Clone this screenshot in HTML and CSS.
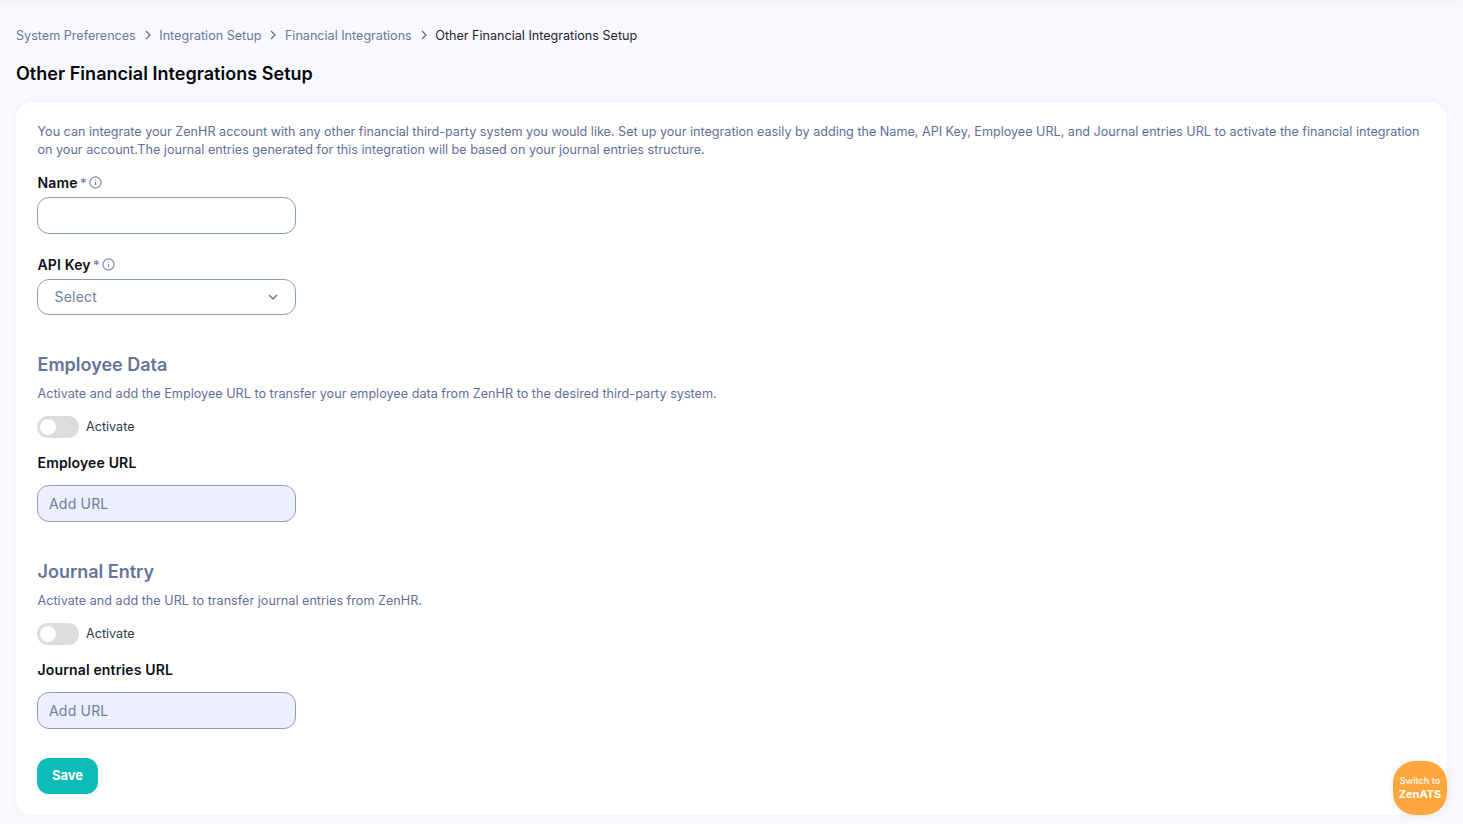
FILE: index.html
```html
<!DOCTYPE html>
<html lang="en">
<head>
<meta charset="utf-8">
<title>Other Financial Integrations Setup</title>
<link rel="stylesheet" href="styles.css">
</head>
<body>
<div class="page">
  <nav class="crumbs">
    <span class="crumb">System Preferences</span>
    <svg class="crumb-sep" viewBox="0 0 8 10"><path d="M2 1l4 4-4 4"/></svg>
    <span class="crumb">Integration Setup</span>
    <svg class="crumb-sep" viewBox="0 0 8 10"><path d="M2 1l4 4-4 4"/></svg>
    <span class="crumb">Financial Integrations</span>
    <svg class="crumb-sep" viewBox="0 0 8 10"><path d="M2 1l4 4-4 4"/></svg>
    <span class="crumb crumb-current">Other Financial Integrations Setup</span>
  </nav>
  <h1 class="title">Other Financial Integrations Setup</h1>
  <main class="card">
    <p class="desc intro">You can integrate your ZenHR account with any other financial third-party system you would like. Set up your integration easily by adding the Name, API Key, Employee URL, and Journal entries URL to activate the financial integration on your account.The journal entries generated for this integration will be based on your journal entries structure.</p>

    <div class="label-row name-label">
      <span class="label">Name</span><span class="req">*</span>
      <svg class="info" viewBox="0 0 12 12"><circle cx="6" cy="6" r="5.2"/><path d="M6 5.4v3M6 3.2v.9"/></svg>
    </div>
    <div class="input"></div>

    <div class="label-row api-label">
      <span class="label">API Key</span><span class="req">*</span>
      <svg class="info" viewBox="0 0 12 12"><circle cx="6" cy="6" r="5.2"/><path d="M6 5.4v3M6 3.2v.9"/></svg>
    </div>
    <div class="input select">
      <span>Select</span>
      <svg class="chev" viewBox="0 0 10 6"><path d="M1 1l4 4 4-4"/></svg>
    </div>

    <h2 class="section">Employee Data</h2>
    <p class="desc">Activate and add the Employee URL to transfer your employee data from ZenHR to the desired third-party system.</p>
    <div class="toggle-row">
      <span class="toggle"><span class="knob"></span></span>
      <span class="toggle-text">Activate</span>
    </div>
    <div class="label url-label">Employee URL</div>
    <div class="input url">Add URL</div>

    <h2 class="section">Journal Entry</h2>
    <p class="desc">Activate and add the URL to transfer journal entries from ZenHR.</p>
    <div class="toggle-row">
      <span class="toggle"><span class="knob"></span></span>
      <span class="toggle-text">Activate</span>
    </div>
    <div class="label url-label">Journal entries URL</div>
    <div class="input url">Add URL</div>

    <button class="save" type="button">Save</button>
  </main>
</div>
<div class="switch"><span class="switch-top">Switch to</span><span class="switch-main">ZenATS</span></div>
</body>
</html>
```
FILE: styles.css
```css
* { box-sizing: border-box; }
html, body { margin: 0; height: 824px; overflow: hidden; }
body {
  font-family: Inter, "Liberation Sans", sans-serif;
  background: linear-gradient(#f3f4f8 0, #f8f9fe 14px);
  position: relative;
}
.page { padding: 26px 16px 0; }
.crumbs { display: flex; align-items: center; height: 18px; font-size: 12.6px; gap: 7.75px; }
.crumb { color: #6b7a99; }
.crumb-current { color: #1f2533; }
.crumb-sep { width: 8px; height: 10px; fill: none; stroke: #5f6b85; stroke-width: 1.2; }
.title { margin: 18px 0 0; font-size: 18px; line-height: 24px; font-weight: 600; letter-spacing: .03px; color: #05070d; }
.card {
  margin-top: 16px;
  width: 1431px;
  height: 713px;
  background: #fff;
  border-radius: 16px;
  padding: 21px 22px 0 21px;
  box-shadow: 0 0 6px rgba(90, 100, 150, .05);
}
.desc { margin: 0; padding-left: .5px; font-size: 12.65px; line-height: 18px; color: #5f7097; }
.intro { font-size: 12.6px; }
.label-row { display: flex; align-items: center; height: 18px; padding-left: .5px; }
.name-label { margin-top: 15px; margin-bottom: 5px; }
.api-label { margin-top: 22px; margin-bottom: 5px; }
.label { font-size: 14px; line-height: 18px; font-weight: 600; letter-spacing: .15px; color: #0b0f19; }
.req { font-size: 13px; font-weight: 600; color: #7a88a8; margin-left: 2px; }
.info { width: 13px; height: 13px; margin: -2px 0 0 2px; fill: none; stroke: #7486ab; stroke-width: 1; }
.input {
  width: 259px;
  height: 37px;
  border: 1px solid #8d9cb9;
  border-radius: 12px;
  background: #fff;
  font-size: 14px;
  color: #6f7f9f;
  display: flex;
  align-items: center;
}
.select { height: 36px; padding: 0 17px 1px 16.5px; justify-content: space-between; letter-spacing: .2px; }
.chev { width: 10px; height: 6px; fill: none; stroke: #55637f; stroke-width: 1.2; }
.section { margin: 37px 0 7px; padding-left: .5px; font-size: 18px; line-height: 26px; font-weight: 600; color: #64759b; }
.toggle-row { display: flex; align-items: center; gap: 7px; margin-top: 13px; height: 22px; }
.toggle { width: 42px; height: 22px; border-radius: 11px; background: #dcdcdc; padding: 3px 0 0 3px; }
.knob { display: block; width: 16px; height: 16px; border-radius: 50%; background: #fff; }
.toggle-text { padding-bottom: 2px; font-size: 12.6px; color: #30394d; }
.url-label { margin-top: 16px; height: 18px; padding-left: .5px; }
.url { margin-top: 13px; background: #ebf0fc; padding-left: 11px; letter-spacing: .2px; }
.save {
  display: block;
  margin-top: 29px;
  width: 61px;
  height: 36px;
  border: 0;
  border-radius: 12px;
  background: #0bbdb6;
  color: #fff;
  font: 700 13px Inter, "Liberation Sans", sans-serif;
  padding: 0 0 2px;
}
.switch {
  position: absolute;
  left: 1393px;
  top: 761px;
  width: 54px;
  height: 54px;
  border-radius: 22px;
  background: #ffa73d;
  color: #fff;
  display: flex;
  flex-direction: column;
  align-items: center;
  justify-content: center;
  box-shadow: 0 0 6px rgba(90, 100, 150, .15);
}
.switch-top { font-size: 9px; line-height: 12px; font-weight: 600; color: #fff3e2; }
.switch-main { font-size: 11px; line-height: 15px; font-weight: 700; }
```
